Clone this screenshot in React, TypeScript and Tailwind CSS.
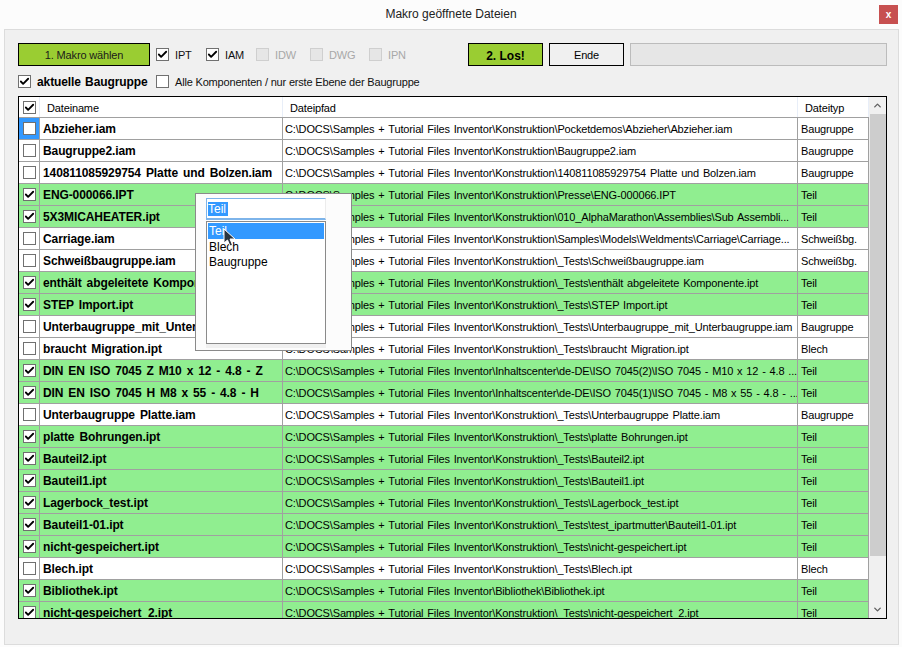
import { Check, ChevronDown, ChevronUp } from 'lucide-react'

type Row = { name: string; path: string; type: string; on: boolean }

const root = 'C:\\DOCS\\Samples + Tutorial Files Inventor\\'
const base = root + 'Konstruktion\\'

const rows: Row[] = [
  { name: 'Abzieher.iam', path: base + 'Pocketdemos\\Abzieher\\Abzieher.iam', type: 'Baugruppe', on: false },
  { name: 'Baugruppe2.iam', path: base + 'Baugruppe2.iam', type: 'Baugruppe', on: false },
  { name: '140811085929754 Platte und Bolzen.iam', path: base + '140811085929754 Platte und Bolzen.iam', type: 'Baugruppe', on: false },
  { name: 'ENG-000066.IPT', path: base + 'Presse\\ENG-000066.IPT', type: 'Teil', on: true },
  { name: '5X3MICAHEATER.ipt', path: base + '010_AlphaMarathon\\Assemblies\\Sub Assembli...', type: 'Teil', on: true },
  { name: 'Carriage.iam', path: base + 'Samples\\Models\\Weldments\\Carriage\\Carriage...', type: 'Schweißbg.', on: false },
  { name: 'Schweißbaugruppe.iam', path: base + '_Tests\\Schweißbaugruppe.iam', type: 'Schweißbg.', on: false },
  { name: 'enthält abgeleitete Komponente.ipt', path: base + '_Tests\\enthält abgeleitete Komponente.ipt', type: 'Teil', on: true },
  { name: 'STEP Import.ipt', path: base + '_Tests\\STEP Import.ipt', type: 'Teil', on: true },
  { name: 'Unterbaugruppe_mit_Unterbaugruppe.iam', path: base + '_Tests\\Unterbaugruppe_mit_Unterbaugruppe.iam', type: 'Baugruppe', on: false },
  { name: 'braucht Migration.ipt', path: base + '_Tests\\braucht Migration.ipt', type: 'Blech', on: false },
  { name: 'DIN EN ISO 7045 Z M10 x 12 - 4.8 - Z', path: root + 'Inhaltscenter\\de-DE\\ISO 7045(2)\\ISO 7045 - M10 x 12 - 4.8 ...', type: 'Teil', on: true },
  { name: 'DIN EN ISO 7045 H M8 x 55 - 4.8 - H', path: root + 'Inhaltscenter\\de-DE\\ISO 7045(1)\\ISO 7045 - M8 x 55 - 4.8 - ...', type: 'Teil', on: true },
  { name: 'Unterbaugruppe Platte.iam', path: base + '_Tests\\Unterbaugruppe Platte.iam', type: 'Baugruppe', on: false },
  { name: 'platte Bohrungen.ipt', path: base + '_Tests\\platte Bohrungen.ipt', type: 'Teil', on: true },
  { name: 'Bauteil2.ipt', path: base + '_Tests\\Bauteil2.ipt', type: 'Teil', on: true },
  { name: 'Bauteil1.ipt', path: base + '_Tests\\Bauteil1.ipt', type: 'Teil', on: true },
  { name: 'Lagerbock_test.ipt', path: base + '_Tests\\Lagerbock_test.ipt', type: 'Teil', on: true },
  { name: 'Bauteil1-01.ipt', path: base + '_Tests\\test_ipartmutter\\Bauteil1-01.ipt', type: 'Teil', on: true },
  { name: 'nicht-gespeichert.ipt', path: base + '_Tests\\nicht-gespeichert.ipt', type: 'Teil', on: true },
  { name: 'Blech.ipt', path: base + '_Tests\\Blech.ipt', type: 'Blech', on: false },
  { name: 'Bibliothek.ipt', path: root + 'Bibliothek\\Bibliothek.ipt', type: 'Teil', on: true },
  { name: 'nicht-gespeichert_2.ipt', path: base + '_Tests\\nicht-gespeichert_2.ipt', type: 'Teil', on: true },
]

function Box({ checked = false, disabled = false }: { checked?: boolean; disabled?: boolean }) {
  return (
    <span
      className={`flex h-[13px] w-[13px] shrink-0 items-center justify-center border ${
        disabled ? 'border-[#cfcfcf] bg-[#e6e6e6]' : 'border-[#707070] bg-white'
      }`}
    >
      {checked && <Check className="h-[11px] w-[11px] text-black" strokeWidth={4} />}
    </span>
  )
}

function Option({ label, checked, disabled, className }: { label: string; checked?: boolean; disabled?: boolean; className: string }) {
  return (
    <div className={`flex shrink-0 items-center gap-[6px] ${disabled ? 'text-[#a8a8a8]' : 'text-[#111]'} ${className}`}>
      <Box checked={checked} disabled={disabled} />
      <span className="pt-[2px]">{label}</span>
    </div>
  )
}

export default function App() {
  return (
    <div className="flex h-[647px] w-[902px] flex-col overflow-hidden bg-[#fcfcfc] text-[11px] leading-none tracking-[-0.15px] text-black [font-family:'Liberation_Sans',Arial,sans-serif] [word-spacing:1px]">
      {/* Title bar */}
      <div className="relative flex h-[29px] shrink-0 items-center justify-center pb-[1px] text-[12px] tracking-normal text-[#222] [word-spacing:0]">
        Makro geöffnete Dateien
        <div className="absolute right-[4px] top-[5px] flex h-[19px] w-[19px] items-center justify-center bg-[#c75050] text-[10px] font-bold text-white">
          x
        </div>
      </div>

      {/* Panel */}
      <div className="mb-[2px] ml-[4px] mr-[3px] flex min-h-0 flex-1 flex-col border border-[#dcdcdc] bg-[#f0f0f0] pl-[13px] pr-[11px] pt-[13px]">
        <div className="flex h-[23px] items-center">
          <button className="h-[23px] w-[132px] shrink-0 border border-black bg-[#9acd32] pt-[2px] text-[#1a1a1a]">1. Makro wählen</button>
          <Option label="IPT" checked className="ml-[6px] w-[50px]" />
          <Option label="IAM" checked className="w-[50px]" />
          <Option label="IDW" disabled className="w-[54px]" />
          <Option label="DWG" disabled className="w-[59px]" />
          <Option label="IPN" disabled className="w-[50px]" />
          <button className="ml-auto h-[23px] w-[75px] shrink-0 border border-black bg-[#9acd32] pt-[2px] text-[12px] font-bold tracking-normal">2. Los!</button>
          <button className="ml-[6px] h-[23px] w-[75px] shrink-0 border border-black bg-[#f0f0f0] pt-[2px]">Ende</button>
          <div className="ml-[6px] h-[23px] w-[257px] shrink-0 border border-[#bcbcbc] bg-[#e6e6e6]" />
        </div>

        <div className="mt-[9px] flex h-[13px] items-center">
          <div className="flex w-[138px] shrink-0 items-center gap-[6px] text-[12px] font-bold tracking-[-0.1px]">
            <Box checked />
            <span className="whitespace-nowrap">aktuelle Baugruppe</span>
          </div>
          <Option label="Alle Komponenten / nur erste Ebene der Baugruppe" className="tracking-[-0.18px] [word-spacing:0]" />
        </div>

        {/* Grid */}
        <div className="mt-[8px] flex h-[523px] w-[869px] border border-black bg-[#f0f0f0]">
          <div className="flex min-w-0 flex-1 flex-col overflow-hidden">
            <div className="flex h-[21px] shrink-0 border-b border-[#a0a0a0] bg-white">
              <div className="flex w-[21px] shrink-0 items-center justify-center border-r border-[#e8eef8] pl-[1px]">
                <Box checked />
              </div>
              <div className="flex w-[243px] shrink-0 items-center border-r border-[#e8eef8] pl-[7px] pt-[2px]">Dateiname</div>
              <div className="flex w-[515px] shrink-0 items-center border-r border-[#e8eef8] pl-[7px] pt-[2px]">Dateipfad</div>
              <div className="flex w-[71px] shrink-0 items-center border-r border-[#e8eef8] pl-[7px] pt-[2px]">Dateityp</div>
            </div>
            {rows.map((row, i) => (
              <div key={i} className={`flex h-[22px] shrink-0 border-b border-[#a0a0a0] ${row.on ? 'bg-[#90ee90]' : 'bg-white'}`}>
                <div className={`flex w-[21px] shrink-0 items-center justify-center border-r border-[#a0a0a0] pl-[1px] ${i === 0 ? 'bg-[#3399ff]' : ''}`}>
                  <Box checked={row.on} />
                </div>
                <div className="flex w-[243px] shrink-0 items-center overflow-hidden whitespace-nowrap border-r border-[#a0a0a0] pl-[3px] pt-[1px] text-[12px] font-bold tracking-[-0.1px] [word-spacing:1.75px]">
                  {row.name}
                </div>
                <div className="flex w-[515px] shrink-0 items-center overflow-hidden whitespace-nowrap border-r border-[#a0a0a0] pl-[2px] pt-[2px]">
                  {row.path}
                </div>
                <div className="flex w-[71px] shrink-0 items-center whitespace-nowrap border-r border-[#a0a0a0] pl-[3px] pt-[2px]">{row.type}</div>
              </div>
            ))}
          </div>

          {/* Scrollbar */}
          <div className="flex w-[17px] shrink-0 flex-col bg-[#f0f0f0]">
            <div className="flex h-[17px] shrink-0 items-center justify-center">
              <ChevronUp className="h-[11px] w-[11px] text-[#606060]" strokeWidth={3} />
            </div>
            <div className="ml-px h-[442px] bg-[#cdcdcd]" />
            <div className="mt-auto flex h-[17px] shrink-0 items-center justify-center">
              <ChevronDown className="h-[11px] w-[11px] text-[#606060]" strokeWidth={3} />
            </div>
          </div>
        </div>

        {/* Type dropdown, opened over the grid */}
        <div className="absolute left-[195px] top-[193px] flex h-[158px] w-[157px] flex-col border border-[#8a8a8a] bg-[#fcfcfc] pl-[10px] pr-[25px] pt-[4px] text-[12px] tracking-normal [word-spacing:0]">
          <div className="flex h-[22px] shrink-0 items-center border border-b-2 border-[#7db4ea] border-r-[#ececec] bg-white pl-[1px]">
            <span className="flex h-[14px] w-[20px] items-center bg-[#3399ff] text-white">Teil</span>
          </div>
          <div className="mt-px h-[123px] shrink-0 border border-[#8a8a8a] bg-white p-px">
            <div className="flex h-[16px] items-center bg-[#3399ff] pb-px pl-px text-white">Teil</div>
            <div className="flex h-[16px] items-center pb-px pl-px">Blech</div>
            <div className="flex h-[14px] items-center pb-px pl-px">Baugruppe</div>
          </div>
          <div className="h-[4px] shrink-0 bg-[#f0f0f0]" />
          <svg className="absolute left-[27px] top-[34px] h-[20px] w-[13px]" viewBox="0 0 13 20">
            <path d="M1 1 L1 15 L4.5 12 L7 18 L9.5 17 L7 11 L12 11 Z" fill="#2a3440" stroke="#fff" strokeWidth="1" />
          </svg>
        </div>
      </div>
    </div>
  )
}
